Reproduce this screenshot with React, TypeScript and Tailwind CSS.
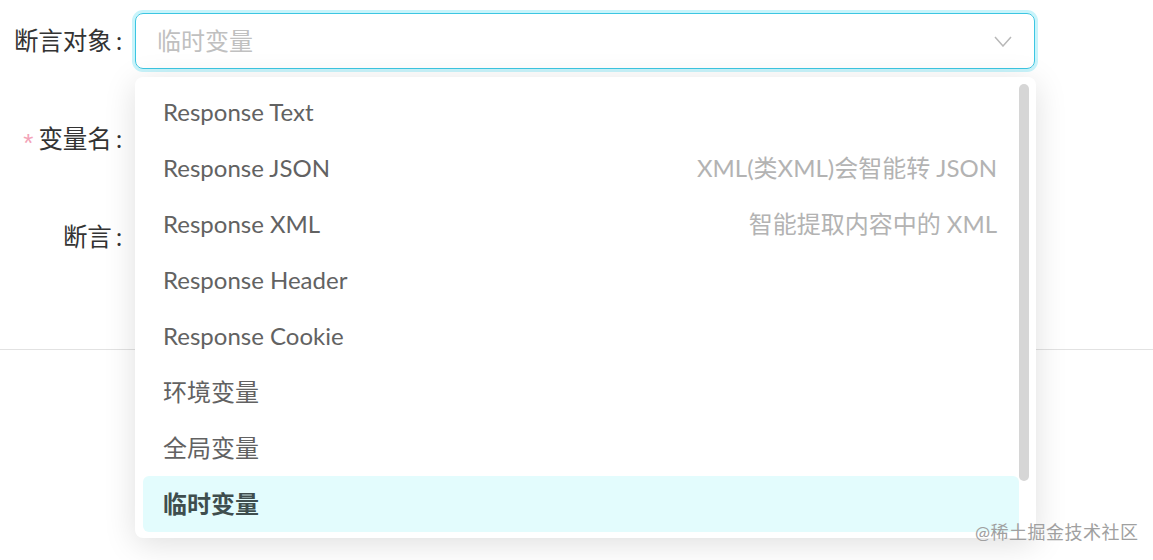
import React from 'react';

interface Option {
  label: string;
  hint?: string;
}

const options: Option[] = [
  { label: 'Response Text' },
  { label: 'Response JSON', hint: 'XML(类XML)会智能转 JSON' },
  { label: 'Response XML', hint: '智能提取内容中的 XML' },
  { label: 'Response Header' },
  { label: 'Response Cookie' },
  { label: '环境变量' },
  { label: '全局变量' },
  { label: '临时变量' },
];

const selected = '临时变量';

const FormRow: React.FC<{ label: string; required?: boolean; children?: React.ReactNode }> = ({
  label,
  required,
  children,
}) => (
  <div className="flex items-center h-[56px]">
    <div className="w-[135px] shrink-0 pr-[13px] flex justify-end items-center text-[24.5px] text-[#333]">
      {required && (
        <span className="text-[#f3a3b8] mr-[5px] text-[26px] leading-none mt-[8px] font-['Liberation_Sans']">*</span>
      )}
      <span>{label}</span>
      <span className="ml-[4px]">:</span>
    </div>
    <div className="flex-1 mr-[118px] h-full">{children}</div>
  </div>
);

export default function App() {
  return (
    <div
      className="relative w-[1153px] h-[560px] bg-white overflow-hidden"
      style={{ fontFamily: 'Lato, "Noto Sans CJK SC", sans-serif' }}
    >
      {/* Form */}
      <div className="pt-[13px] flex flex-col gap-[42px]">
        <FormRow label="断言对象">
          <div className="h-full rounded-[8px] border-[1.5px] border-[#3cc6e2] ring-[3px] ring-[#c8f4fb] flex items-center pl-[21px] pr-[22px]">
            <span className="flex-1 text-[24px] text-[#c0c0c0]">临时变量</span>
            <svg width="18" height="11" viewBox="0 0 18 11" fill="none" className="mt-[1px]">
              <path d="M1 1L9 10L17 1" stroke="#b8b8b8" strokeWidth="1.5" />
            </svg>
          </div>
        </FormRow>
        <FormRow label="变量名" required>
          <div className="h-full rounded-[8px] border border-[#dcdcdc]" />
        </FormRow>
        <FormRow label="断言">
          <div className="h-full rounded-[8px] border border-[#dcdcdc]" />
        </FormRow>
      </div>
      <div className="mt-[84px] border-t border-[#e2e2e2]" />

      {/* Dropdown menu */}
      <div className="absolute left-[135px] top-[77px] w-[901px] h-[461px] bg-white rounded-[8px] shadow-[0_6px_32px_rgba(0,0,0,0.13)] flex pl-[8px] pt-[7px] pb-[6px]">
        <div className="flex-1 flex flex-col">
          {options.map((o) => {
            const isSel = o.label === selected;
            return (
              <div
                key={o.label}
                className={`h-[56px] shrink-0 flex items-center justify-between pl-[20px] pr-[22px] rounded-[6px] text-[24px] ${
                  isSel ? 'bg-[#e3fcfd] font-bold text-[#3f4e4e]' : 'text-[#626262]'
                }`}
              >
                <span>{o.label}</span>
                {o.hint && <span className="text-[#b3b3b3]">{o.hint}</span>}
              </div>
            );
          })}
        </div>
        <div className="w-[17px] shrink-0 flex justify-start">
          <div className="w-[10px] h-[397px] rounded-full bg-[#d6d6d6]" />
        </div>
      </div>

      {/* Watermark */}
      <div className="absolute left-[975px] top-[519px] text-[18px] text-[#a0a0a0] tracking-[0.5px]">
        @稀土掘金技术社区
      </div>
    </div>
  );
}
